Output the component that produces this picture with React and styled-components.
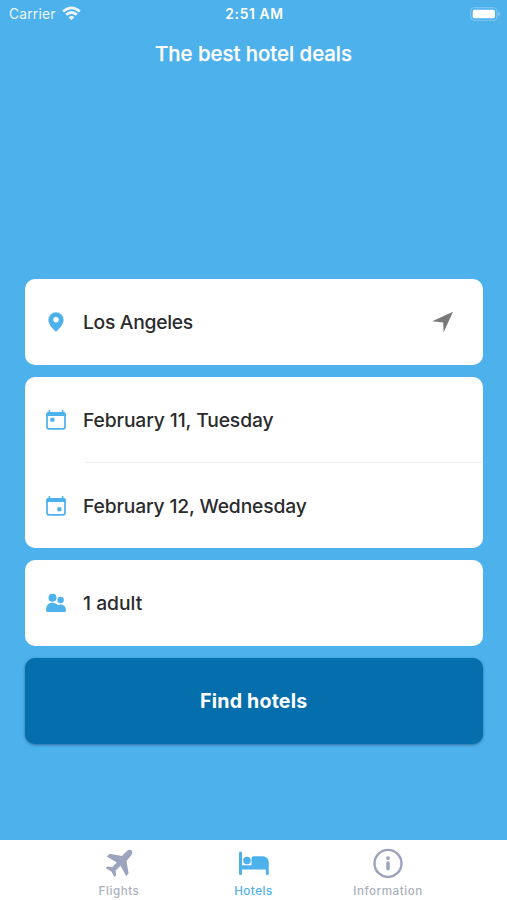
import React from "react";
import styled, { createGlobalStyle } from "styled-components";

const GlobalStyle = createGlobalStyle`
  * { box-sizing: border-box; }
  body { margin: 0; background: #4db1ec; }
`;

const Screen = styled.div`
  display: flex;
  flex-direction: column;
  width: 507px;
  height: 900px;
  background: #4db1ec;
  font-family: Inter, "Liberation Sans", sans-serif;
  overflow: hidden;
  svg { display: block; flex: none; }
`;

const StatusBar = styled.div`
  display: grid;
  grid-template-columns: 1fr auto 1fr;
  align-items: center;
  height: 27px;
  padding: 0 6px 0 9px;
  color: #fff;
`;

const Carrier = styled.div`
  display: flex;
  align-items: center;
  gap: 6px;
  font-size: 13.8px;
  letter-spacing: 0.2px;
  opacity: 0.9;
`;

const Clock = styled.div`
  margin-right: 1px;
  font-size: 13.8px;
  font-weight: 600;
  letter-spacing: 0.65px;
`;

const Battery = styled.div`
  justify-self: end;
`;

const Title = styled.h1`
  margin: 14px 0 0;
  height: 26px;
  line-height: 26px;
  text-align: center;
  color: #fff;
  font-size: 20.4px;
  font-weight: 500;
  letter-spacing: -0.02px;
  -webkit-text-stroke: 0.25px #fff;
`;

const Form = styled.main`
  flex: 1;
  display: flex;
  flex-direction: column;
  gap: 12px;
  padding: 212.4px 24.5px 0 25px;
`;

const Card = styled.section`
  flex: none;
  border-radius: 10px;
  background: #fff;
`;

const Row = styled.div`
  display: flex;
  align-items: center;
  height: 85.7px;
  padding: 0 29px 0 20px;
`;

const RowText = styled.span`
  flex: 1;
  margin-left: 16px;
  color: #2b2b2d;
  font-size: 19.3px;
  font-weight: 500;
  letter-spacing: ${(p) => p.$spacing || 0}px;
  white-space: nowrap;
`;

const Divider = styled.div`
  height: 1px;
  margin: -0.5px 0 -0.5px 60px;
  background: #edf0f2;
`;

const FindButton = styled.button`
  flex: none;
  height: 85.5px;
  border: 0;
  border-radius: 10px;
  background: #056eac;
  box-shadow: 0 1px 3px rgba(20, 50, 90, 0.55);
  color: #fff;
  font: 700 19.6px Inter, "Liberation Sans", sans-serif;
  letter-spacing: 0.2px;
`;

const TabBar = styled.nav`
  display: flex;
  justify-content: center;
  height: 60px;
  background: #fff;
`;

const Tab = styled.div`
  display: flex;
  flex-direction: column;
  align-items: center;
  width: 134.5px;
  padding-top: 8px;
  color: ${(p) => (p.$active ? "#4db1ec" : "#9ba3bd")};
`;

const TabLabel = styled.span`
  margin-top: 6px;
  line-height: 15px;
  font-size: 11.6px;
  font-weight: 500;
  letter-spacing: 0.55px;
  color: ${(p) => (p.$active ? "#4db1ec" : "#abb0bd")};
`;

const Wifi = () => (
  <svg width="19" height="15" viewBox="0 0 19 15" fill="none" stroke="#fff" strokeWidth="2.7">
    <path d="M1.2 5.6 Q9.5 -1.8 17.8 5.6" />
    <path d="M4.2 8.8 Q9.5 4.2 14.8 8.8" />
    <path d="M9.5 14.3 L6.6 11.3 Q9.5 8.9 12.4 11.3 Z" fill="#fff" stroke="none" />
  </svg>
);

const BatteryIcon = () => (
  <svg width="31" height="14" viewBox="0 0 31 14">
    <rect x="0.7" y="0.7" width="26.3" height="12.6" rx="3.6" fill="none" stroke="#fff" strokeOpacity="0.3" />
    <rect x="2.7" y="2.7" width="22.3" height="8.6" rx="2" fill="#fff" />
    <path d="M28.3 5 Q30 5.5 30 7 Q30 8.5 28.3 9 Z" fill="#fff" fillOpacity="0.4" />
  </svg>
);

const Pin = () => (
  <svg width="22" height="22" viewBox="0 0 22 22">
    <path fill="#4db1ec" fillRule="evenodd" d="M11 1.3a7.6 7.6 0 0 0-7.6 7.6c0 4.8 5.2 9.6 7.6 11.8 2.4-2.2 7.6-7 7.6-11.8A7.6 7.6 0 0 0 11 1.3Zm0 4.8a2.7 2.7 0 1 1 0 5.4 2.7 2.7 0 0 1 0-5.4Z" />
  </svg>
);

const LocationArrow = () => (
  <svg width="22" height="22" viewBox="0 0 22 22">
    <path fill="#79797b" d="M21 .8.2 10.2 11.2 11.6l.4 10Z" />
  </svg>
);

const Calendar = ({ x, y }) => (
  <svg width="22" height="22" viewBox="0 0 22 22">
    <rect x="2" y="4" width="18" height="15.8" rx="2" fill="none" stroke="#4db1ec" strokeWidth="1.7" />
    <path d="M1.2 7V5A2.2 2.2 0 0 1 3.4 2.9H3.6V1h1.6v1.9h11.6V1h1.6v1.9h.2A2.2 2.2 0 0 1 20.8 5v2Z" fill="#4db1ec" />
    <rect x={x} y={y} width="4" height="4" rx=".6" fill="#4db1ec" />
  </svg>
);

const People = () => (
  <svg width="22" height="22" viewBox="0 0 22 22" fill="#4db1ec">
    <circle cx="7.5" cy="5.7" r="4" />
    <circle cx="15.6" cy="8" r="3.2" />
    <path d="M1.1 18.2C1.1 13.4 3.6 10.8 7.5 10.8c2.4 0 4 .9 5.1 2.3a6.4 6.4 0 0 1 3-.7c3.5 0 5.3 2.2 5.3 5.8 0 1.5-.6 1.9-1.6 1.9H2.8c-1.1 0-1.7-.4-1.7-1.9Z" />
  </svg>
);

const Plane = () => (
  <svg width="30" height="30" viewBox="-1 -1 30 30" fill="currentColor">
    <path d="M26.4 1.3c-1.2-1-2.9-.7-4.1.4l-5.4 5.2L4.6 4.7 1.8 7.4l10.1 6-4.8 4.9-4.9-.7-1.4 1.6 5.6 3.3 3 5.4 1.7-1.5-.5-4.8 4.9-4.9 5.7 10.2 2.4-2.5-2.1-12.5 4.8-5.7c1.2-1.3 1.5-3.7.1-4.9Z" />
  </svg>
);

const Bed = () => (
  <svg width="30" height="30" viewBox="0 0 30 30" fill="currentColor">
    <path d="M0 4.9a1.5 1.5 0 0 1 3 0V17.3h9.5V10.3a2 2 0 0 1 2-2H24a5.8 5.8 0 0 1 5.8 5.8V25.4a1.5 1.5 0 0 1-3 0v-3.8H3v3.8a1.5 1.5 0 0 1-3 0Z" />
    <circle cx="8" cy="12.5" r="3.8" />
  </svg>
);

const Info = () => (
  <svg width="30" height="30" viewBox="0 0 30 30">
    <circle cx="15" cy="15.4" r="13.5" fill="none" stroke="currentColor" strokeWidth="2.4" />
    <circle cx="15" cy="10.1" r="1.9" fill="currentColor" />
    <path d="M15 15v5.8" stroke="currentColor" strokeWidth="3.5" strokeLinecap="round" />
  </svg>
);

export default function App() {
  return (
    <Screen>
      <GlobalStyle />
      <StatusBar>
        <Carrier>Carrier <Wifi /></Carrier>
        <Clock>2:51 AM</Clock>
        <Battery><BatteryIcon /></Battery>
      </StatusBar>
      <Title>The best hotel deals</Title>
      <Form>
        <Card>
          <Row><Pin /><RowText $spacing={-0.3}>Los Angeles</RowText><LocationArrow /></Row>
        </Card>
        <Card>
          <Row><Calendar x={5.4} y={8.8} /><RowText $spacing={-0.12}>February 11, Tuesday</RowText></Row>
          <Divider />
          <Row><Calendar x={12.4} y={12.3} /><RowText $spacing={-0.16}>February 12, Wednesday</RowText></Row>
        </Card>
        <Card>
          <Row><People /><RowText>1 adult</RowText></Row>
        </Card>
        <FindButton>Find hotels</FindButton>
      </Form>
      <TabBar>
        <Tab><Plane /><TabLabel>Flights</TabLabel></Tab>
        <Tab $active><Bed /><TabLabel $active>Hotels</TabLabel></Tab>
        <Tab><Info /><TabLabel>Information</TabLabel></Tab>
      </TabBar>
    </Screen>
  );
}
